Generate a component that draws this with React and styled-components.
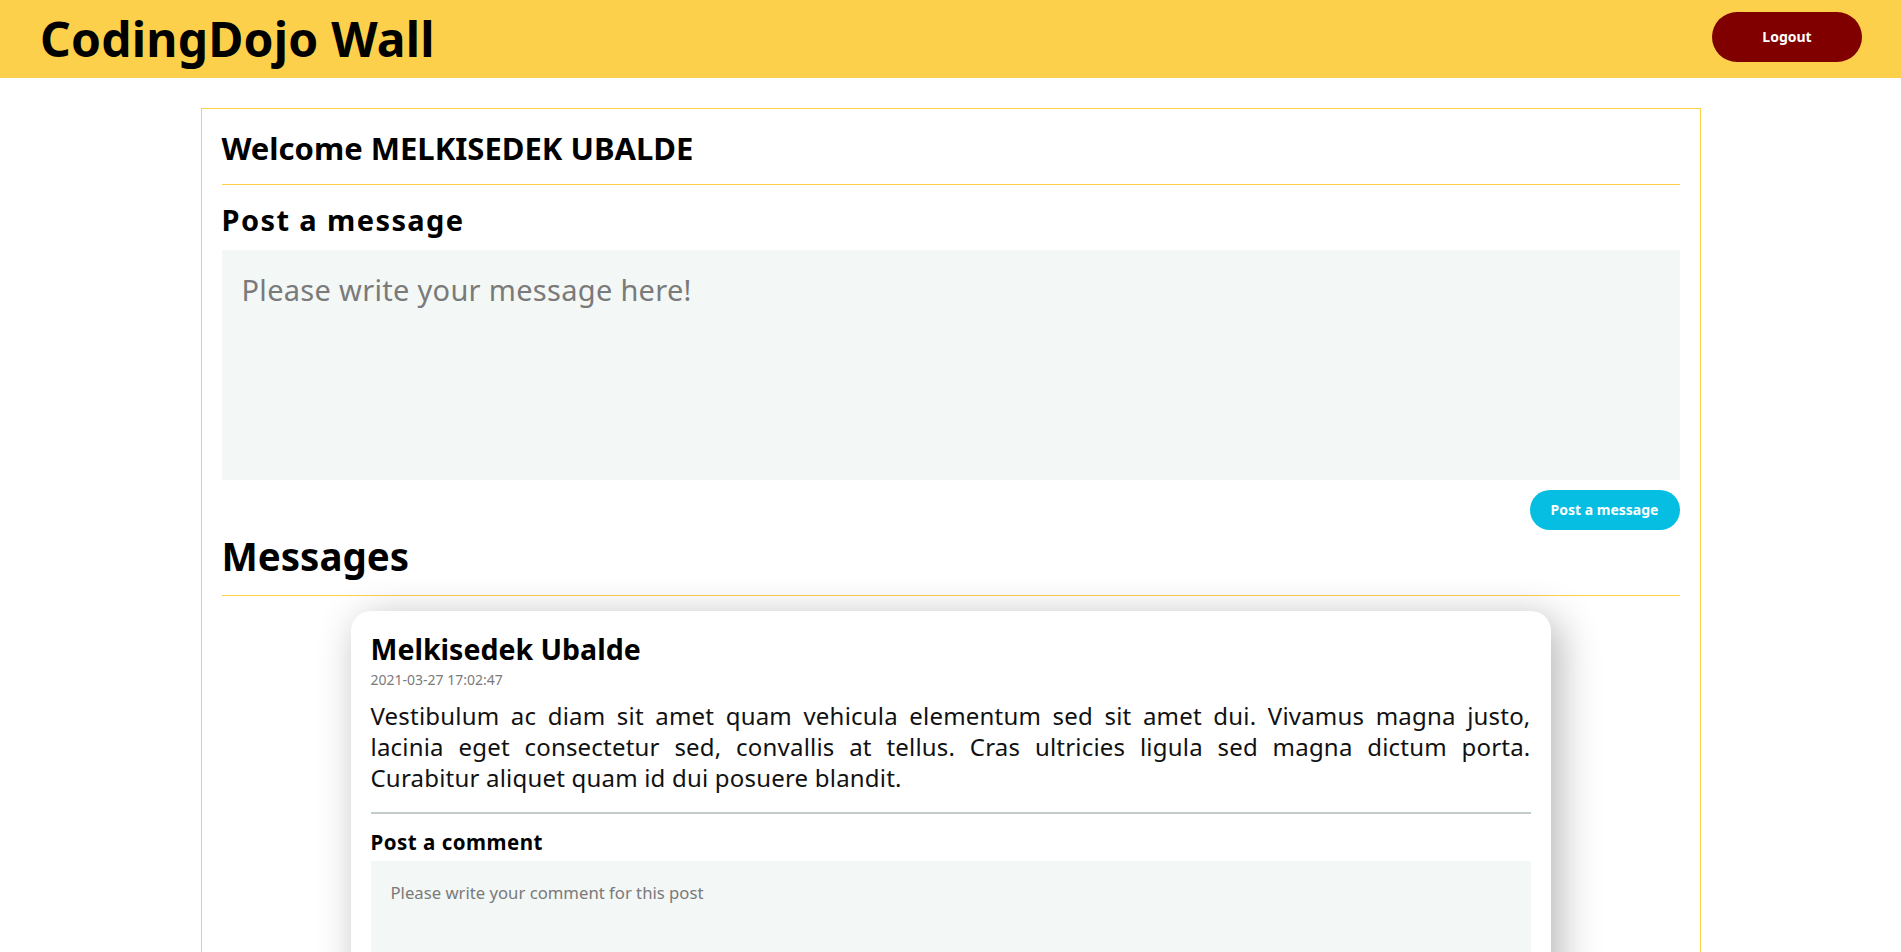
import React from "react";
import styled, { createGlobalStyle } from "styled-components";

const YELLOW = "#FDD04B";

const GlobalStyle = createGlobalStyle`
  html { scrollbar-width: none; }
  html::-webkit-scrollbar { display: none; }
  *, *::before, *::after { box-sizing: border-box; }
  body {
    margin: 0;
    background: #fff;
    color: #000;
    font-family: "Noto Sans", "Open Sans", sans-serif;
  }
`;

const TopBar = styled.header`
  height: 78px;
  background: ${YELLOW};
  display: flex;
  align-items: center;
  justify-content: space-between;
  padding: 0 39px 0 40px;
`;

const Brand = styled.h1`
  margin: 0;
  font-size: 48px;
  font-weight: 700;
  line-height: 1.2;
  letter-spacing: 0.2px;
`;

const PillButton = styled.button`
  border: none;
  color: #fff;
  font-family: inherit;
  font-weight: 700;
  font-size: 14px;
  cursor: pointer;
  width: 150px;
  height: ${(p) => p.$h}px;
  border-radius: ${(p) => p.$h / 2}px;
  background: ${(p) => p.$bg};
  margin-bottom: ${(p) => p.$lift || 0}px;
`;

const Wall = styled.main`
  width: 1500px;
  margin: 30px auto;
  border: 1px solid ${YELLOW};
  padding: 21px 20px 40px;
`;

const Heading = styled.h2`
  margin: ${(p) => p.$mt || 0}px 0 0;
  font-size: ${(p) => p.$size}px;
  letter-spacing: ${(p) => p.$ls || 0}px;
  font-weight: 700;
  line-height: 1.2;
  padding-bottom: ${(p) => (p.$rule ? p.$pb : 0)}px;
  border-bottom: ${(p) => (p.$rule ? `1px solid ${YELLOW}` : "none")};
`;

const MessageBox = styled.textarea`
  display: block;
  width: 100%;
  height: ${(p) => p.$h}px;
  margin-top: ${(p) => p.$mt}px;
  border: none;
  outline: none;
  resize: none;
  background: #f3f7f6;
  padding: 20px;
  font-family: inherit;
  font-size: ${(p) => p.$size}px;
  letter-spacing: ${(p) => p.$ls || 0}px;
  color: #333;
  &::placeholder {
    color: #7a7a7a;
  }
`;

const ButtonRow = styled.div`
  display: flex;
  justify-content: flex-end;
  margin-top: 10px;
`;

const Feed = styled.section`
  display: flex;
  flex-direction: column;
  align-items: center;
  margin-top: 15px;
`;

const Card = styled.article`
  width: 1200px;
  background: #fff;
  border-radius: 20px;
  padding: 21px 20px 20px;
  box-shadow: 8px 8px 40px rgba(0, 0, 0, 0.3);
`;

const Author = styled.h3`
  margin: 0;
  font-size: 28.5px;
  font-weight: 700;
  line-height: 34px;
`;

const Stamp = styled.div`
  margin-top: 5px;
  font-size: 14px;
  line-height: 18px;
  color: #7a7a7a;
`;

const Body = styled.p`
  margin: 11px 0 0;
  font-size: 24px;
  letter-spacing: 0.2px;
  line-height: 31px;
  text-align: justify;
  color: #111;
`;

const Rule = styled.hr`
  margin: 19px 0 0;
  border: none;
  border-top: 2px solid #c4cbcb;
`;

const CommentTitle = styled.h4`
  margin: 16px 0 0;
  font-size: 20.5px;
  letter-spacing: 0.5px;
  font-weight: 700;
  line-height: 24px;
`;

export default function App() {
  return (
    <>
      <GlobalStyle />
      <TopBar>
        <Brand>CodingDojo Wall</Brand>
        <PillButton $h={50} $lift={5} $bg="#800000">Logout</PillButton>
      </TopBar>
      <Wall>
        <Heading $size={31} $rule $pb={17}>Welcome MELKISEDEK UBALDE</Heading>
        <Heading $size={29} $ls={1.4} $mt={18}>Post a message</Heading>
        <MessageBox $h={230} $mt={12} $size={29} $ls={0.3} placeholder="Please write your message here!" />
        <ButtonRow>
          <PillButton $h={40} $bg="#06BEE1">Post a message</PillButton>
        </ButtonRow>
        <Heading $size={38.5} $mt={3} $rule $pb={16}>Messages</Heading>
        <Feed>
          <Card>
            <Author>Melkisedek Ubalde</Author>
            <Stamp>2021-03-27 17:02:47</Stamp>
            <Body>
              Vestibulum ac diam sit amet quam vehicula elementum sed sit amet dui. Vivamus magna justo,
              lacinia eget consectetur sed, convallis at tellus. Cras ultricies ligula sed magna dictum porta.
              Curabitur aliquet quam id dui posuere blandit.
            </Body>
            <Rule />
            <CommentTitle>Post a comment</CommentTitle>
            <MessageBox $h={120} $mt={7} $size={16.7} placeholder="Please write your comment for this post" />
            <ButtonRow>
              <PillButton $h={40} $bg="#06BEE1">Post a comment</PillButton>
            </ButtonRow>
          </Card>
        </Feed>
      </Wall>
    </>
  );
}
